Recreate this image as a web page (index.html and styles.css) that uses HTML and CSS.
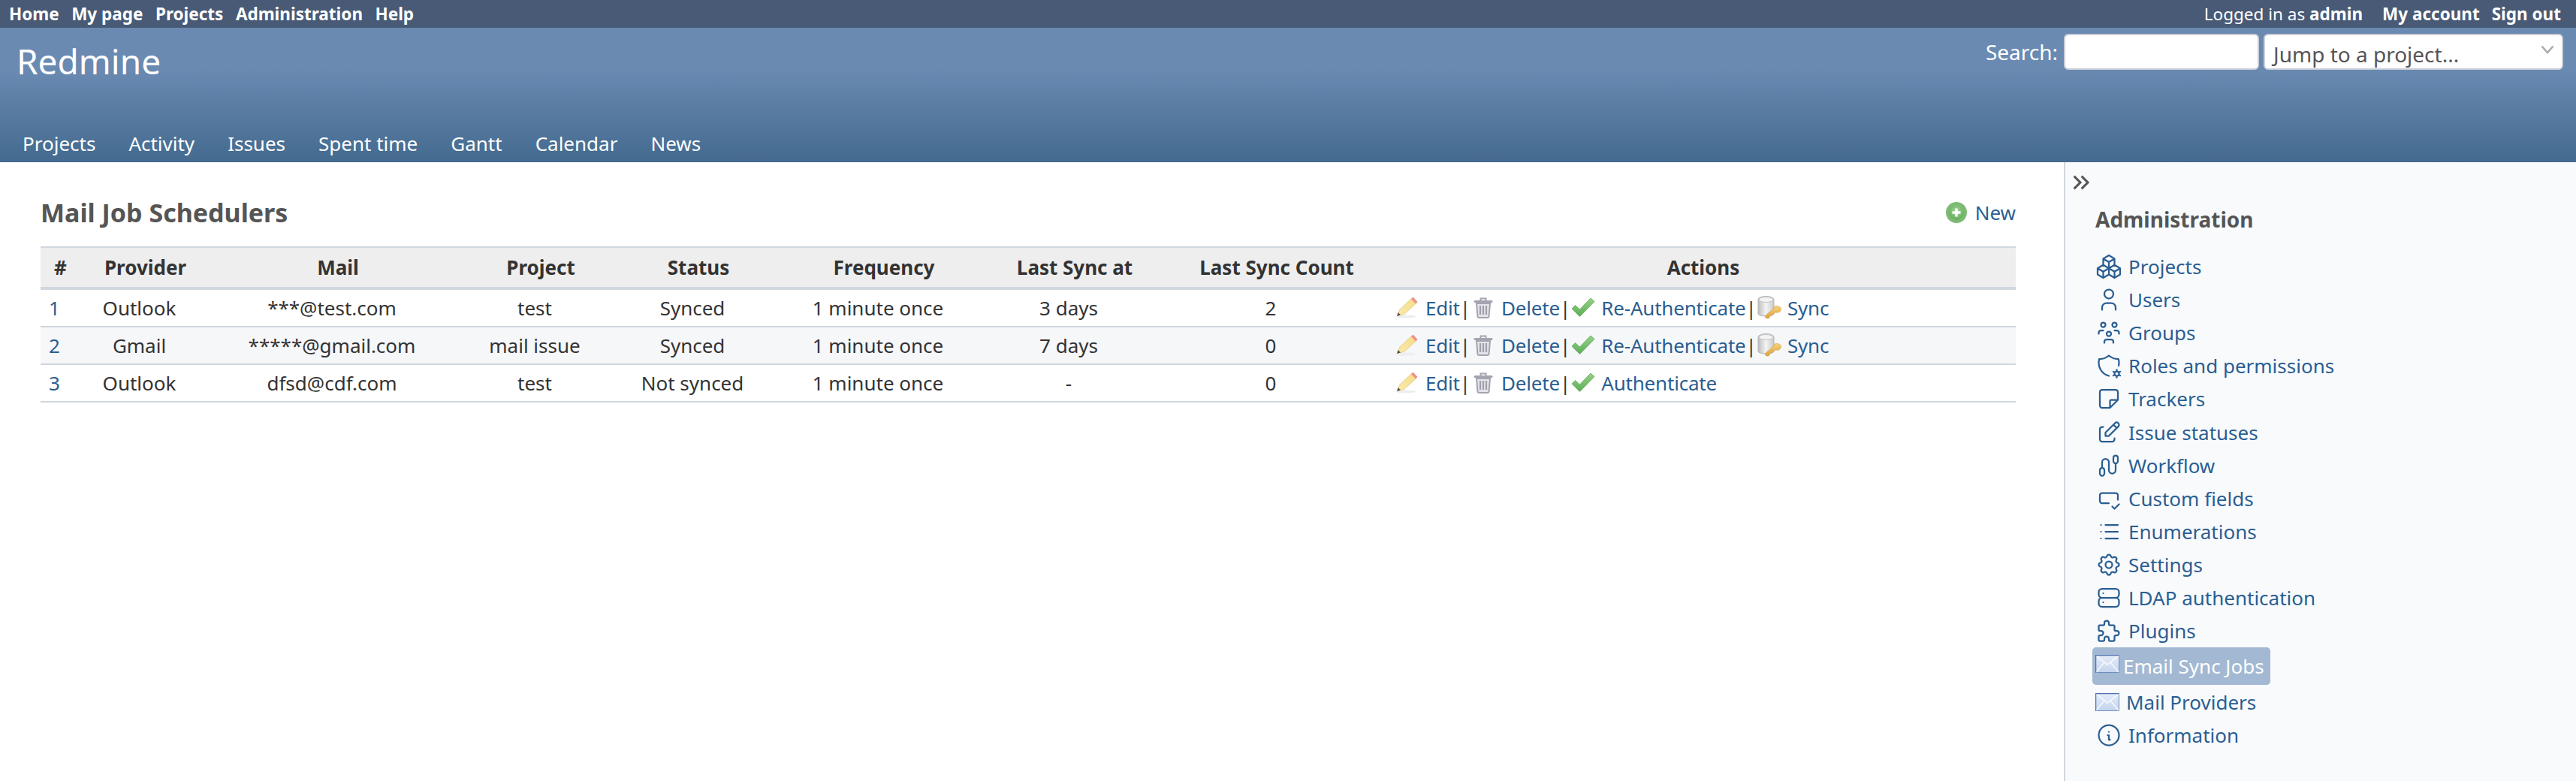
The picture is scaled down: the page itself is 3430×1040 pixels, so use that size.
FILE: index.html
```html
<!DOCTYPE html>
<html lang="en">
<head>
<meta charset="utf-8">
<title>Mail Job Schedulers - Redmine</title>
<link rel="stylesheet" href="styles.css">
</head>
<body>
<svg class="defs" width="0" height="0" aria-hidden="true">
  <defs>
    <linearGradient id="pencilG" x1="0" y1="1" x2="1" y2="0"><stop offset="0" stop-color="#f9eaae"/><stop offset="1" stop-color="#f6dc86"/></linearGradient>
    <linearGradient id="checkG" x1="0" y1="0" x2="0" y2="1"><stop offset="0" stop-color="#98d186"/><stop offset="1" stop-color="#5cae58"/></linearGradient>
    <linearGradient id="dbG" x1="0" y1="0" x2="1" y2="0"><stop offset="0" stop-color="#bdbdbd"/><stop offset=".5" stop-color="#f4f4f4"/><stop offset="1" stop-color="#c9c9c9"/></linearGradient>
    <linearGradient id="keyG" x1="0" y1="0" x2="0" y2="1"><stop offset="0" stop-color="#f6d27a"/><stop offset="1" stop-color="#dda23e"/></linearGradient>
    <radialGradient id="addG" cx=".5" cy=".4" r=".6"><stop offset="0" stop-color="#a8d89a"/><stop offset="1" stop-color="#62ab5c"/></radialGradient>
    <linearGradient id="mailG" x1="0" y1="0" x2="0" y2="1"><stop offset="0" stop-color="#e4ecf8"/><stop offset="1" stop-color="#c4d4ee"/></linearGradient>

    <symbol id="i-pencil" viewBox="0 0 32 32">
      <ellipse cx="14" cy="27.500" rx="13" ry="2" fill="#eeeeee"/>
      <path d="M3 26l2.500-7.500L22 3l6 6.500L11.500 24.500z" fill="url(#pencilG)" stroke="#e3c268" stroke-width=".7"/>
      <path d="M23.500 1.500l6 6.500-2.500 2.500-6-6.500z" fill="#ee8f8f"/>
      <path d="M2 27l1.500-5 3.500 3.500z" fill="#5c5340"/>
    </symbol>
    <symbol id="i-trash" viewBox="0 0 32 32">
      <path d="M5 7.500h22" stroke="#a4a4b0" stroke-width="3" stroke-linecap="round" fill="none"/>
      <path d="M12.500 6V3.500h7V6" stroke="#a4a4b0" stroke-width="2" fill="none"/>
      <path d="M7 10h18l-1.500 17.500a2 2 0 0 1-2 1.500h-11a2 2 0 0 1-2-1.500z" fill="#e4e4ea" stroke="#a4a4b0" stroke-width="2"/>
      <path d="M12 13v12M16 13v12M20 13v12" stroke="#a0a0ac" stroke-width="2.200"/>
    </symbol>
    <symbol id="i-check" viewBox="0 0 32 32">
      <path d="M1 17l4.500-4.500 6 5.500L26 3l5 4.500L11.500 27.500z" fill="url(#checkG)" stroke="#5ea958" stroke-width=".8"/>
    </symbol>
    <symbol id="i-dbkey" viewBox="0 0 32 32">
      <path d="M1 5c0-6 21-6 21 0v19c0 4-21 4-21 0z" fill="url(#dbG)" stroke="#b5b5b5"/>
      <ellipse cx="11.500" cy="5" rx="9.500" ry="3.500" fill="#f3f3f3" stroke="#c4c4c4"/>
      <path d="M12 30l-2-2 2-3 9-7 1-3c2-2 7-2 9 1 1 2 0 5-3 6-1.500 .5-3 0-4 0l-7 5-2 3z" fill="url(#keyG)" stroke="#d9a549" stroke-width=".7"/>
    </symbol>
    <symbol id="i-add" viewBox="0 0 28 28">
      <circle cx="14" cy="14" r="14" fill="#7dbb72"/>
      <circle cx="14" cy="14" r="10" fill="url(#addG)"/>
      <path d="M14 8.500v11M8.500 14h11" stroke="#fff" stroke-width="3.400"/>
    </symbol>
    <symbol id="i-mail" viewBox="0 0 32 24">
      <rect x=".5" y=".5" width="31" height="23" fill="url(#mailG)" stroke="#6d8cc0"/>
      <path d="M1 1l15 12L31 1M1 23l11-13M31 23L20 10" fill="none" stroke="#f3f7fd" stroke-width="1.800"/>
      <path d="M.5 23.500V.5H31.500" fill="none" stroke="#4e72ad" stroke-width="1.500"/>
    </symbol>

    <symbol id="t-packages" viewBox="0 0 24 24"><path d="M7 16.500l-5-3 5-3 5 3v5.500l-5 3zM2 13.500v5.500l5 3M7 16.545l5-3.030M17 16.500l-5-3 5-3 5 3v5.500l-5 3zM12 19l5 3M17 16.500l5-3M12 13.500v-5.500l-5-3 5-3 5 3v5.500M7 5.030v5.455M12 8l5-3"/></symbol>
    <symbol id="t-user" viewBox="0 0 24 24"><path d="M8 7a4 4 0 1 0 8 0a4 4 0 0 0-8 0M6 21v-2a4 4 0 0 1 4-4h4a4 4 0 0 1 4 4v2"/></symbol>
    <symbol id="t-group" viewBox="0 0 24 24"><path d="M10 13a2 2 0 1 0 4 0a2 2 0 0 0-4 0M8 21v-1a2 2 0 0 1 2-2h4a2 2 0 0 1 2 2v1M15 5a2 2 0 1 0 4 0a2 2 0 0 0-4 0M17 10h2a2 2 0 0 1 2 2v1M5 5a2 2 0 1 0 4 0a2 2 0 0 0-4 0M3 13v-1a2 2 0 0 1 2-2h2"/></symbol>
    <symbol id="t-shield" viewBox="0 0 24 24"><path d="M12 21a12 12 0 0 1-8.500-15a12 12 0 0 0 8.500-3a12 12 0 0 0 8.500 3c.568 1.933.635 3.957.223 5.890M19 19m-2 0a2 2 0 1 0 4 0a2 2 0 1 0-4 0M19 15.500v1.500M19 21v1.500M22.032 17.250l-1.299.75M17.270 20l-1.300.75M15.970 17.250l1.300.75M20.733 20l1.300.75"/></symbol>
    <symbol id="t-note" viewBox="0 0 24 24"><path d="M13 20l7-7M13 20v-6a1 1 0 0 1 1-1h6v-7a2 2 0 0 0-2-2h-12a2 2 0 0 0-2 2v12a2 2 0 0 0 2 2h7"/></symbol>
    <symbol id="t-edit" viewBox="0 0 24 24"><path d="M7 7h-1a2 2 0 0 0-2 2v9a2 2 0 0 0 2 2h9a2 2 0 0 0 2-2v-1M20.385 6.585a2.100 2.100 0 0 0-2.970-2.970l-8.415 8.385v3h3l8.385-8.415zM16 5l3 3"/></symbol>
    <symbol id="t-flow" viewBox="0 0 24 24"><path d="M4 16a2 2 0 0 1 4 0v3a2 2 0 0 1-4 0zM16 5a2 2 0 0 1 4 0v3a2 2 0 0 1-4 0zM6 14v-5a3 3 0 0 1 6 0v7a3 3 0 0 0 6 0v-6"/></symbol>
    <symbol id="t-input" viewBox="0 0 24 24"><path d="M20 13v-4a2 2 0 0 0-2-2h-12a2 2 0 0 0-2 2v5a2 2 0 0 0 2 2h6M15 19l2 2 4-4"/></symbol>
    <symbol id="t-list" viewBox="0 0 24 24"><path d="M9 6h11M9 12h11M9 18h11M5 6v.01M5 12v.01M5 18v.01"/></symbol>
    <symbol id="t-cog" viewBox="0 0 24 24"><path d="M10.325 4.317c.426-1.756 2.924-1.756 3.350 0a1.724 1.724 0 0 0 2.573 1.066c1.543-.94 3.310.826 2.370 2.370a1.724 1.724 0 0 0 1.065 2.572c1.756.426 1.756 2.924 0 3.350a1.724 1.724 0 0 0-1.066 2.573c.94 1.543-.826 3.310-2.370 2.370a1.724 1.724 0 0 0-2.572 1.065c-.426 1.756-2.924 1.756-3.350 0a1.724 1.724 0 0 0-2.573-1.066c-1.543.94-3.310-.826-2.370-2.370a1.724 1.724 0 0 0-1.065-2.572c-1.756-.426-1.756-2.924 0-3.350a1.724 1.724 0 0 0 1.066-2.573c-.94-1.543.826-3.310 2.370-2.370c1 .608 2.296.07 2.572-1.065zM9 12a3 3 0 1 0 6 0a3 3 0 0 0-6 0"/></symbol>
    <symbol id="t-server" viewBox="0 0 24 24"><path d="M3 7a3 3 0 0 1 3-3h12a3 3 0 0 1 3 3v2a3 3 0 0 1-3 3h-12a3 3 0 0 1-3-3zM3 15a3 3 0 0 1 3-3h12a3 3 0 0 1 3 3v2a3 3 0 0 1-3 3h-12a3 3 0 0 1-3-3zM7 8v.01M7 16v.01"/></symbol>
    <symbol id="t-puzzle" viewBox="0 0 24 24"><path d="M4 7h3a1 1 0 0 0 1-1v-1a2 2 0 0 1 4 0v1a1 1 0 0 0 1 1h3a1 1 0 0 1 1 1v3a1 1 0 0 0 1 1h1a2 2 0 0 1 0 4h-1a1 1 0 0 0-1 1v3a1 1 0 0 1-1 1h-3a1 1 0 0 1-1-1v-1a2 2 0 0 0-4 0v1a1 1 0 0 1-1 1h-3a1 1 0 0 1-1-1v-3a1 1 0 0 1 1-1h1a2 2 0 0 0 0-4h-1a1 1 0 0 1-1-1v-3a1 1 0 0 1 1-1"/></symbol>
    <symbol id="t-info" viewBox="0 0 24 24"><path d="M3 12a9 9 0 1 0 18 0a9 9 0 0 0-18 0M12 9h.01M11 12h1v4h1"/></symbol>
    <symbol id="t-chevrons" viewBox="0 0 24 24"><path d="M7 7l5 5-5 5M13 7l5 5-5 5"/></symbol>
    <symbol id="t-chevron" viewBox="0 0 18 12"><path d="M1.500 1.500L9 10l7.500-8.500"/></symbol>
  </defs>
</svg>

<header class="top-menu">
  <nav class="top-links">
    <a href="#">Home</a><a href="#">My page</a><a href="#">Projects</a><a href="#">Administration</a><a href="#">Help</a>
  </nav>
  <div class="top-account">
    <span class="logged">Logged in as <a href="#">admin</a></span>
    <a href="#">My account</a><a href="#">Sign out</a>
  </div>
</header>

<div class="banner">
  <div class="banner-row">
    <h1 class="brand">Redmine</h1>
    <form class="quick">
      <label class="quick-label" for="q">Search:</label>
      <input id="q" class="quick-input" type="text">
      <div class="jump"><span>Jump to a project...</span><svg class="jump-arrow"><use href="#t-chevron"/></svg></div>
    </form>
  </div>
  <nav class="main-menu">
    <a href="#">Projects</a><a href="#">Activity</a><a href="#">Issues</a><a href="#">Spent time</a><a href="#">Gantt</a><a href="#">Calendar</a><a href="#">News</a>
  </nav>
</div>

<div class="main">
  <main class="content">
    <div class="title-row">
      <h2 class="page-title">Mail Job Schedulers</h2>
      <a class="new-link" href="#"><svg class="ico-add"><use href="#i-add"/></svg>New</a>
    </div>
    <table class="list">
      <colgroup>
        <col class="c-id"><col class="c-provider"><col class="c-mail"><col class="c-project"><col class="c-status"><col class="c-freq"><col class="c-last"><col class="c-count"><col class="c-actions">
      </colgroup>
      <thead>
        <tr><th>#</th><th>Provider</th><th>Mail</th><th>Project</th><th>Status</th><th>Frequency</th><th>Last Sync at</th><th>Last Sync Count</th><th>Actions</th></tr>
      </thead>
      <tbody>
        <tr>
          <td><a href="#">1</a></td><td>Outlook</td><td>***@test.com</td><td>test</td><td>Synced</td><td>1 minute once</td><td>3 days</td><td>2</td>
          <td class="actions"><a class="act" href="#"><svg class="ico"><use href="#i-pencil"/></svg>Edit</a>|<a class="act" href="#"><svg class="ico"><use href="#i-trash"/></svg>Delete</a>|<a class="act" href="#"><svg class="ico"><use href="#i-check"/></svg>Re-Authenticate</a>|<a class="act" href="#"><svg class="ico"><use href="#i-dbkey"/></svg>Sync</a></td>
        </tr>
        <tr>
          <td><a href="#">2</a></td><td>Gmail</td><td>*****@gmail.com</td><td>mail issue</td><td>Synced</td><td>1 minute once</td><td>7 days</td><td>0</td>
          <td class="actions"><a class="act" href="#"><svg class="ico"><use href="#i-pencil"/></svg>Edit</a>|<a class="act" href="#"><svg class="ico"><use href="#i-trash"/></svg>Delete</a>|<a class="act" href="#"><svg class="ico"><use href="#i-check"/></svg>Re-Authenticate</a>|<a class="act" href="#"><svg class="ico"><use href="#i-dbkey"/></svg>Sync</a></td>
        </tr>
        <tr>
          <td><a href="#">3</a></td><td>Outlook</td><td>dfsd@cdf.com</td><td>test</td><td>Not synced</td><td>1 minute once</td><td>-</td><td>0</td>
          <td class="actions"><a class="act" href="#"><svg class="ico"><use href="#i-pencil"/></svg>Edit</a>|<a class="act" href="#"><svg class="ico"><use href="#i-trash"/></svg>Delete</a>|<a class="act" href="#"><svg class="ico"><use href="#i-check"/></svg>Authenticate</a></td>
        </tr>
      </tbody>
    </table>
  </main>

  <aside class="sidebar">
    <svg class="toggle"><use href="#t-chevrons"/></svg>
    <h3 class="side-title">Administration</h3>
    <nav class="admin-menu">
      <a class="item" href="#"><svg class="ti"><use href="#t-packages"/></svg>Projects</a>
      <a class="item" href="#"><svg class="ti"><use href="#t-user"/></svg>Users</a>
      <a class="item" href="#"><svg class="ti"><use href="#t-group"/></svg>Groups</a>
      <a class="item" href="#"><svg class="ti"><use href="#t-shield"/></svg>Roles and permissions</a>
      <a class="item" href="#"><svg class="ti"><use href="#t-note"/></svg>Trackers</a>
      <a class="item" href="#"><svg class="ti"><use href="#t-edit"/></svg>Issue statuses</a>
      <a class="item" href="#"><svg class="ti"><use href="#t-flow"/></svg>Workflow</a>
      <a class="item" href="#"><svg class="ti"><use href="#t-input"/></svg>Custom fields</a>
      <a class="item" href="#"><svg class="ti"><use href="#t-list"/></svg>Enumerations</a>
      <a class="item" href="#"><svg class="ti"><use href="#t-cog"/></svg>Settings</a>
      <a class="item" href="#"><svg class="ti"><use href="#t-server"/></svg>LDAP authentication</a>
      <a class="item" href="#"><svg class="ti"><use href="#t-puzzle"/></svg>Plugins</a>
      <a class="item selected" href="#"><svg class="ico-mail"><use href="#i-mail"/></svg>Email Sync Jobs</a>
      <a class="item plain" href="#"><svg class="ico-mail"><use href="#i-mail"/></svg>Mail Providers</a>
      <a class="item" href="#"><svg class="ti"><use href="#t-info"/></svg>Information</a>
    </nav>
  </aside>
</div>
</body>
</html>
```

FILE: styles.css
```css
* { box-sizing: border-box; }
html, body { margin: 0; height: 100%; }
body {
  display: flex;
  flex-direction: column;
  height: 1040px;
  overflow: hidden;
  font-family: "Noto Sans", sans-serif;
  font-size: 26px;
  color: #333;
  background: #fff;
}
a { color: #2a5e91; text-decoration: none; }
.defs { display: block; height: 0; }

.top-menu {
  flex: 0 0 37px;
  display: flex;
  justify-content: space-between;
  align-items: center;
  padding: 0 20px 0 12px;
  background: #485a75;
  color: #fff;
  font-size: 22.500px;
  line-height: 37px;
}
.top-menu a { color: #fff; font-weight: 700; }
.top-links { display: flex; gap: 16.500px; }
.top-account { display: flex; gap: 16px; }
.logged { margin-right: 10px; }

.banner {
  flex: 0 0 179px;
  display: flex;
  flex-direction: column;
  justify-content: space-between;
  color: #fff;
  background: linear-gradient(#6a8ab2 0, #6a8ab2 30%, #446a8f 100%);
}
.banner-row { display: flex; justify-content: space-between; align-items: flex-start; padding: 8px 17px 0 22px; }
.brand { margin: 4px 0 0; font-size: 46px; font-weight: 400; line-height: 64px; }
.quick { display: flex; align-items: center; }
.quick-label { font-size: 28px; margin-right: 8px; }
.quick-input {
  width: 260px;
  height: 48px;
  margin: 0 6px 0 0;
  border: 2px solid #c9ced6;
  border-radius: 6px;
  background: #fff;
}
.jump {
  width: 399px;
  height: 48px;
  display: flex;
  justify-content: space-between;
  align-items: center;
  padding: 6px 10px 0 11px;
  border: 2px solid #c9ced6;
  border-radius: 6px;
  background: #fff;
  color: #555;
  font-size: 28px;
}
.jump-arrow { width: 18px; height: 12px; margin-bottom: 12px; fill: none; stroke: #aaa; stroke-width: 2.500; }
.main-menu { display: flex; gap: 44px; padding: 0 0 7px 30px; font-size: 26px; line-height: 36px; }
.main-menu a { color: #fff; }

.main { flex: 1 1 auto; display: flex; min-height: 0; }
.content { flex: 1 1 auto; padding: 46px 64px 0 54px; min-width: 0; }
.title-row { display: flex; justify-content: space-between; align-items: center; height: 42px; margin-bottom: 24px; }
.page-title { margin: 0; font-size: 34px; font-weight: 700; color: #555; line-height: 42px; }
.new-link { display: flex; align-items: center; gap: 11px; line-height: 36px; }
.ico-add { width: 28px; height: 28px; }

.list { width: 2630px; table-layout: fixed; border-collapse: separate; border-spacing: 0; }
.c-id { width: 53px; } .c-provider { width: 173px; } .c-mail { width: 340px; } .c-project { width: 200px; }
.c-status { width: 220px; } .c-freq { width: 274px; } .c-last { width: 234px; } .c-count { width: 304px; } .c-actions { width: 832px; }
.list th {
  height: 58px;
  padding: 0;
  background: #eee;
  border-top: 2px solid #d0d7de;
  border-bottom: 4px solid #d0d7de;
  text-align: center;
  font-weight: 700;
}
.list td {
  height: 50px;
  padding: 0 16px 0 0;
  border-bottom: 2px solid #d0d7de;
  text-align: center;
  white-space: nowrap;
}
.list tbody tr:nth-child(2) { background: #f6f7f9; }
.list td.actions { padding: 0 0 0 5px; text-align: left; }
.act { letter-spacing: -0.2px; }
.ico { width: 32px; height: 32px; margin: 0 8px 0 1px; vertical-align: -6px; }

.sidebar {
  flex: 0 0 682px;
  border-left: 2px solid #d0d7de;
  background: #f9fafc;
  padding: 7px 0 0 8px;
  color: #555;
}
.toggle { display: block; width: 40px; height: 40px; margin-left: -8px; fill: none; stroke: #555; stroke-width: 1.800; }
.side-title { margin: 9px 0 21px 32px; font-size: 28px; line-height: 40px; font-weight: 700; color: #555; }
.admin-menu { display: flex; flex-direction: column; align-items: flex-start; margin-left: 28px; }
.item { display: flex; align-items: center; height: 44.100px; padding-left: 4px; font-size: 26px; line-height: 36px; white-space: nowrap; }
.ti { flex: none; width: 36px; height: 36px; margin-right: 8px; fill: none; stroke: #2a5e91; stroke-width: 1.500; stroke-linecap: round; stroke-linejoin: round; }
.ico-mail { flex: none; width: 32px; height: 24px; margin-right: 5px; }
.item.selected { height: 50px; margin: 0; padding: 0 8px 0 4px; background: #a3b8d2; border-radius: 5px; color: #fff; }
.item.selected .ico-mail { margin-top: -6px; }
.item.plain { height: 45px; padding-left: 4px; }
.item.plain .ico-mail { margin-right: 9px; }
```
